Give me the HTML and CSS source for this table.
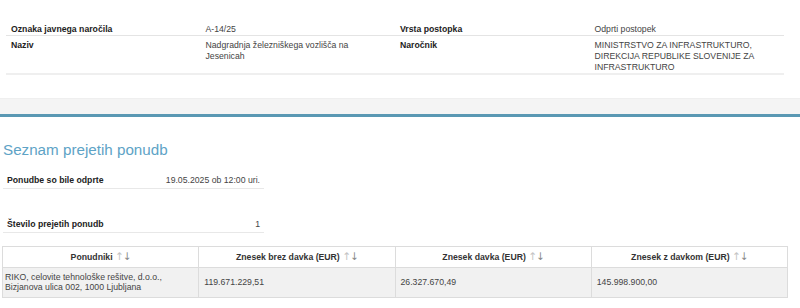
FILE: index.html
```html
<!DOCTYPE html>
<html lang="sl">
<head>
    <meta charset="UTF-8">
    <meta name="viewport" content="width=device-width, initial-scale=1.0">
    <title>Seznam prejetih ponudb</title>
    <link rel="stylesheet" href="styles.css">
</head>
<body>

    <!-- Osnovni podatki o naročilu -->
    <table class="details">
        <tr>
            <th>Oznaka javnega naročila</th>
            <td>A-14/25</td>
            <th>Vrsta postopka</th>
            <td>Odprti postopek</td>
        </tr>
        <tr class="last">
            <th>Naziv</th>
            <td>Nadgradnja železniškega vozlišča na Jesenicah</td>
            <th>Naročnik</th>
            <td>MINISTRSTVO ZA INFRASTRUKTURO, DIREKCIJA REPUBLIKE SLOVENIJE ZA INFRASTRUKTURO</td>
        </tr>
    </table>

    <div class="band"></div>

    <h2>Seznam prejetih ponudb</h2>

    <table class="summary">
        <tr>
            <th>Ponudbe so bile odprte</th>
            <td>19.05.2025 ob 12:00 uri.</td>
        </tr>
    </table>

    <table class="summary second">
        <tr>
            <th>Število prejetih ponudb</th>
            <td>1</td>
        </tr>
    </table>

    <table class="offers">
        <thead>
            <tr>
                <th>Ponudniki <span class="sort"><i>↑</i>↓</span></th>
                <th>Znesek brez davka (EUR) <span class="sort"><i>↑</i>↓</span></th>
                <th>Znesek davka (EUR) <span class="sort"><i>↑</i>↓</span></th>
                <th>Znesek z davkom (EUR) <span class="sort"><i>↑</i>↓</span></th>
            </tr>
        </thead>
        <tbody>
            <tr>
                <td class="bidder">RIKO, celovite tehnološke rešitve, d.o.o.,<br>Bizjanova ulica 002, 1000 Ljubljana</td>
                <td>119.671.229,51</td>
                <td>26.327.670,49</td>
                <td>145.998.900,00</td>
            </tr>
        </tbody>
    </table>

</body>
</html>
```

FILE: styles.css
```css
body {
    font-family: "Liberation Sans", Arial, sans-serif;
    font-size: 8.7px;
    color: #333;
    background: #fff;
    margin: 0;
    padding: 0;
}

table {
    border-collapse: collapse;
}

th, td {
    text-align: left;
    vertical-align: top;
    line-height: 11px;
}

th {
    color: #222;
}

/* Osnovni podatki */
.details {
    table-layout: fixed;
    width: 778px;
    margin: 20px 0 0 6px;
}

.details th, .details td {
    padding: 4px 10px 0 5px;
    border-bottom: 1px solid #e4e4e4;
}

.details td {
    color: #444;
}

.details .last th, .details .last td {
    border-bottom: 2px solid #efefef;
}

/* Siv pas z modro črto */
.band {
    margin-top: 23px;
    height: 15px;
    background: #f4f4f4;
    border-top: 1px solid #efefef;
    border-bottom: 3px solid #5a98b3;
}

h2 {
    font-size: 15.2px;
    font-weight: normal;
    line-height: 18px;
    color: #5ea3c6;
    margin: 24px 0 0 3px;
}

/* Povzetek */
.summary {
    width: 261px;
    margin: 12px 0 0 3px;
}

.summary.second {
    margin-top: 26px;
}

.summary th, .summary td {
    padding: 4px 4px 2px;
    border-bottom: 1px solid #e8e8e8;
}

.summary td {
    text-align: right;
    color: #444;
}

/* Seznam ponudb */
.offers {
    table-layout: fixed;
    width: 786px;
    margin: 13px 0 0 2px;
}

.offers th, .offers td {
    border: 1px solid #dcdcdc;
}

.offers th {
    text-align: center;
    padding: 4px 5px;
    background: #fff;
    color: #333;
}

.offers td {
    background: #f1f1f1;
    color: #444;
    line-height: 9.5px;
    padding: 5px 5px;
    vertical-align: middle;
}

.offers td.bidder {
    padding-left: 2px;
}

/* puščici za razvrščanje */
.sort {
    font-family: "DejaVu Sans", sans-serif;
    font-size: 10.5px;
    font-weight: normal;
    line-height: 10px;
    letter-spacing: -1px;
    color: #8a8a8a;
}

.sort i {
    font-style: normal;
    color: #c4c4c4;
}
```
